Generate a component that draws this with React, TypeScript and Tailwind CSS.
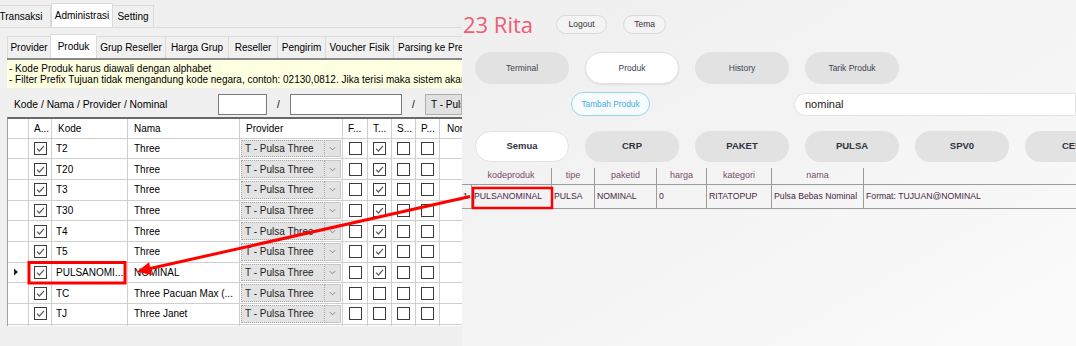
import React from 'react';

const rows = [
  { kode: 'T2', nama: 'Three', t: true },
  { kode: 'T20', nama: 'Three', t: true },
  { kode: 'T3', nama: 'Three', t: true },
  { kode: 'T30', nama: 'Three', t: true },
  { kode: 'T4', nama: 'Three', t: true },
  { kode: 'T5', nama: 'Three', t: true },
  { kode: 'PULSANOMI...', nama: 'NOMINAL', t: true, current: true },
  { kode: 'TC', nama: 'Three Pacuan Max (...', t: false },
  { kode: 'TJ', nama: 'Three Janet', t: false },
  { kode: '', nama: '', t: false },
];

const cols = 'grid grid-cols-[21px_23px_76px_112px_103px_25px_24px_24px_24px_1fr]';
const cell = 'border-r border-b border-[#cfcfcf] flex items-center overflow-hidden whitespace-nowrap';

function Box({ on }: { on: boolean }) {
  return (
    <span className="flex h-[13px] w-[13px] items-center justify-center border border-[#3c3c3c] bg-white">
      {on && (
        <svg viewBox="0 0 11 11" className="h-[11px] w-[11px]">
          <path d="M2 5.6 L4.4 8 L9 2.8" fill="none" stroke="#5a5a5a" strokeWidth="1.2" />
        </svg>
      )}
    </span>
  );
}

function Combo() {
  return (
    <div className="flex h-full w-full items-stretch p-[1px]">
      <div className="flex flex-1 items-center border border-dotted border-[#a8a8a8] bg-[#e3e3e3] pl-[3px] text-[#222]">
        T - Pulsa Three
      </div>
      <div className="flex w-[16px] items-center justify-center border-y border-r border-[#c8c8c8] bg-[#e3e3e3]">
        <svg viewBox="0 0 10 10" className="h-[9px] w-[9px]">
          <path d="M2 3.5 L5 6.5 L8 3.5" fill="none" stroke="#7a7a7a" strokeWidth="1" />
        </svg>
      </div>
    </div>
  );
}

function LeftPanel() {
  const tabs2 = [
    { label: 'Provider', w: 'w-[43px]' },
    { label: 'Produk', w: 'w-[46px]', on: true },
    { label: 'Grup Reseller', w: 'w-[69px]' },
    { label: 'Harga Grup', w: 'w-[63px]' },
    { label: 'Reseller', w: 'w-[49px]' },
    { label: 'Pengirim', w: 'w-[48px]' },
    { label: 'Voucher Fisik', w: 'w-[68px]' },
  ];

  return (
    <div className="flex h-full w-[462px] shrink-0 flex-col overflow-hidden bg-[#f0f0f0] font-['Liberation_Sans',Arial,sans-serif] text-[10px] text-black">
      {/* tab utama */}
      <div className="mt-[5px] flex h-[23px] items-stretch border-b border-[#dadada]">
        <div className="-ml-[9px] flex w-[60px] items-center justify-center border-x border-t border-[#dadada]">Transaksi</div>
        <div className="-mt-[2px] flex w-[62px] items-center justify-center border-x border-t border-[#dadada] bg-white">Administrasi</div>
        <div className="flex w-[41px] items-center justify-center border-r border-t border-[#dadada]">Setting</div>
      </div>

      {/* sub tab */}
      <div className="ml-[7px] mt-[8px] flex h-[22px] items-stretch">
        {tabs2.map((t) => (
          <div
            key={t.label}
            className={`flex ${t.w} items-center justify-center border-l border-t border-[#dadada] ${t.on ? '-mt-[2px] bg-white' : ''}`}
          >
            {t.label}
          </div>
        ))}
        <div className="flex flex-1 items-center overflow-hidden whitespace-nowrap border-l border-t border-[#dadada] pl-[4px]">
          Parsing ke Prefix
        </div>
      </div>

      {/* catatan */}
      <div className="ml-[7px] h-[30px] border-t-2 border-[#8a8a8a] bg-[#ffffe1] pl-[2px] pt-[3px] leading-[11px] whitespace-nowrap">
        <div>- Kode Produk harus diawali dengan alphabet</div>
        <div>- Filter Prefix Tujuan tidak mengandung kode negara, contoh: 02130,0812. Jika terisi maka sistem akan menolak</div>
      </div>

      {/* filter */}
      <div className="ml-[7px] flex h-[29px] items-center pt-[4px]">
        <div className="w-[211px] pl-[7px] text-[10.3px]">Kode / Nama / Provider / Nominal</div>
        <div className="h-[21px] w-[49px] border border-[#7a7a7a] bg-white" />
        <div className="w-[23px] text-center">/</div>
        <div className="h-[21px] w-[112px] border border-[#7a7a7a] bg-white" />
        <div className="w-[23px] text-center">/</div>
        <div className="flex h-[21px] flex-1 items-center overflow-hidden whitespace-nowrap border border-[#adadad] bg-[#e1e1e1] pl-[5px]">
          T - Pulsa Three
        </div>
      </div>

      {/* grid */}
      <div className="ml-[7px] h-[209px] overflow-hidden border-l border-t-2 border-l-[#a0a0a0] border-t-[#696969] bg-white">
        <div className={`${cols} h-[19.5px]`}>
          <div className={cell} />
          <div className={`${cell} pl-[5px]`}>A...</div>
          <div className={`${cell} pl-[6px]`}>Kode</div>
          <div className={`${cell} pl-[6px]`}>Nama</div>
          <div className={`${cell} pl-[6px]`}>Provider</div>
          <div className={`${cell} pl-[5px]`}>F...</div>
          <div className={`${cell} pl-[5px]`}>T...</div>
          <div className={`${cell} pl-[5px]`}>S...</div>
          <div className={`${cell} pl-[5px]`}>P...</div>
          <div className={`${cell} border-r-0 pl-[7px]`}>Nominal</div>
        </div>
        {rows.map((r, i) => (
          <div key={i} className={`${cols} h-[20.7px]`}>
            <div className={`${cell} justify-center`}>
              {r.current && (
                <svg viewBox="0 0 6 8" className="ml-[-4px] h-[8px] w-[6px]">
                  <path d="M1 0.5 L5 4 L1 7.5 Z" fill="#222" />
                </svg>
              )}
            </div>
            <div className={`${cell} justify-center`}>{i < 9 && <Box on />}</div>
            <div className={`${cell} pl-[4px]`}>{r.kode}</div>
            <div className={`${cell} pl-[6px]`}>{r.nama}</div>
            <div className={cell}>
              <Combo />
            </div>
            <div className={`${cell} justify-center`}><Box on={false} /></div>
            <div className={`${cell} justify-center`}><Box on={r.t} /></div>
            <div className={`${cell} justify-center`}><Box on={false} /></div>
            <div className={`${cell} justify-center`}><Box on={false} /></div>
            <div className={`${cell} border-r-0`} />
          </div>
        ))}
      </div>
    </div>
  );
}

const navs = ['Terminal', 'Produk', 'History', 'Tarik Produk'];
const cats = ['Semua', 'CRP', 'PAKET', 'PULSA', 'SPV0', 'CEK'];

const tcols = 'grid grid-cols-[9px_81px_43px_62px_50px_65px_92px_1fr]';

function RightPanel() {
  return (
    <div className="flex h-full flex-1 flex-col overflow-hidden bg-linear-to-br from-[#efefef] via-[#f4f4f4] to-[#fbfbfb] font-['Liberation_Sans',Arial,sans-serif]">
      <div className="mt-[8px] flex h-[32px] items-center">
        <span className="pl-[1px] font-['Open_Sans','Noto_Sans',sans-serif] text-[22px] font-medium leading-none text-[#ee5d75]">23 Rita</span>
        <button className="ml-[23px] h-[19px] w-[51px] rounded-full border border-[#d9d9d9] bg-[#f4f4f4] text-[8.5px] text-[#333]">Logout</button>
        <button className="ml-[16px] h-[19px] w-[43px] rounded-full border border-[#d9d9d9] bg-[#f4f4f4] text-[8.5px] text-[#333]">Tema</button>
      </div>

      <div className="mt-[12px] flex gap-[16px] pl-[13px]">
        {navs.map((n) => (
          <div
            key={n}
            className={`flex h-[32px] w-[94px] shrink-0 items-center justify-center rounded-full text-[8.5px] text-[#3b4256] ${
              n === 'Produk' ? 'border border-[#e2e2e2] bg-white shadow-[0_1px_2px_rgba(0,0,0,0.08)]' : 'bg-[#e2e2e2]'
            }`}
          >
            {n}
          </div>
        ))}
      </div>

      <div className="mt-[8px] flex h-[24px] items-center">
        <button className="ml-[109px] h-[24px] w-[79px] shrink-0 rounded-full border border-[#92d5f5] bg-[#f7fbfd] text-[8.3px] text-[#45abe2]">
          Tambah Produk
        </button>
        <div className="ml-[144px] flex h-[23px] flex-1 items-center rounded-l-full border border-[#e3e3e3] bg-white pl-[10px] text-[11px] text-[#222]">
          nominal
        </div>
      </div>

      <div className="mt-[15px] flex gap-[16px] pl-[13px]">
        {cats.map((c) => (
          <div
            key={c}
            className={`flex h-[31px] w-[94px] shrink-0 items-center justify-center rounded-full text-[9.5px] font-bold text-[#2f3444] ${
              c === 'Semua' ? 'border border-[#e2e2e2] bg-white' : 'bg-[#e2e2e2]'
            }`}
          >
            {c}
          </div>
        ))}
      </div>

      <div className="mt-[6px] text-[9px]">
        <div className={`${tcols} h-[17px] border-b border-[#9c9c9c] text-[#7b4a6e]`}>
          <div />
          {['kodeproduk', 'tipe', 'paketid', 'harga', 'kategori', 'nama'].map((h) => (
            <div key={h} className="flex items-center justify-center border-r border-[#9c9c9c]">
              {h}
            </div>
          ))}
          <div />
        </div>
        <div className={`${tcols} h-[24px] border-b border-[#9c9c9c] text-[8.7px] text-[#4a2646]`}>
          <div className="flex items-center pl-[1px]">1</div>
          {['PULSANOMINAL', 'PULSA', 'NOMINAL', '0', 'RITATOPUP', 'Pulsa Bebas Nominal'].map((v, i) => (
            <div key={i} className={`flex items-center overflow-hidden whitespace-nowrap border-r border-[#9c9c9c] pl-[2px] ${i === 0 ? 'border-l' : ''}`}>
              {v}
            </div>
          ))}
          <div className="flex items-center pl-[2px]">Format: TUJUAN@NOMINAL</div>
        </div>
      </div>
    </div>
  );
}

function Annotations() {
  return (
    <svg className="pointer-events-none absolute inset-0" width="1076" height="346" viewBox="0 0 1076 346">
      <rect x="29" y="262.5" width="96" height="20.5" fill="none" stroke="#f00" strokeWidth="3" />
      <rect x="473" y="188" width="79" height="20" fill="none" stroke="#f00" strokeWidth="2.5" />
      <line x1="470" y1="196.5" x2="149" y2="268.8" stroke="#f00" strokeWidth="3" />
      <polygon points="137,271.7 152,275 149,262.3" fill="#f00" />
    </svg>
  );
}

export default function App() {
  return (
    <div className="relative flex h-[346px] w-[1076px] overflow-hidden bg-[#f0f0f0]">
      <LeftPanel />
      <RightPanel />
      <Annotations />
    </div>
  );
}
